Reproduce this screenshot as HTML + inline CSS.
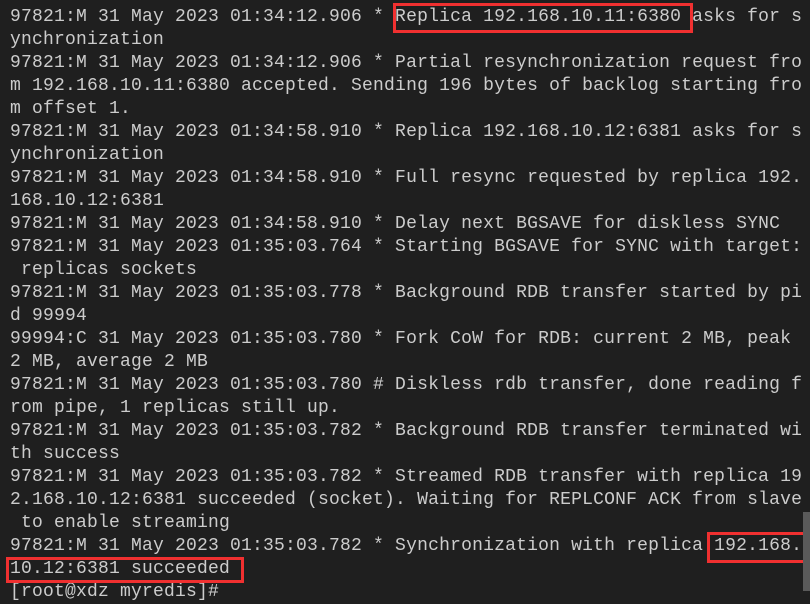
<!DOCTYPE html>
<html><head><meta charset="utf-8"><style>
html,body{margin:0;padding:0;width:810px;height:591px;overflow:hidden;background:#1f1f1f;}
pre{position:absolute;left:10px;top:6px;margin:0;font-family:"Liberation Mono",monospace;font-size:18px;letter-spacing:0.2px;line-height:23px;color:#cccccc;white-space:pre;}
.box{position:absolute;border:3px solid #f03030;box-sizing:border-box;}
.sb{position:absolute;left:803px;top:512px;width:7px;height:79px;background:#5a5a5a;}
</style></head><body>
<pre>97821:M 31 May 2023 01:34:12.906 * Replica 192.168.10.11:6380 asks for s
ynchronization
97821:M 31 May 2023 01:34:12.906 * Partial resynchronization request fro
m 192.168.10.11:6380 accepted. Sending 196 bytes of backlog starting fro
m offset 1.
97821:M 31 May 2023 01:34:58.910 * Replica 192.168.10.12:6381 asks for s
ynchronization
97821:M 31 May 2023 01:34:58.910 * Full resync requested by replica 192.
168.10.12:6381
97821:M 31 May 2023 01:34:58.910 * Delay next BGSAVE for diskless SYNC
97821:M 31 May 2023 01:35:03.764 * Starting BGSAVE for SYNC with target:
 replicas sockets
97821:M 31 May 2023 01:35:03.778 * Background RDB transfer started by pi
d 99994
99994:C 31 May 2023 01:35:03.780 * Fork CoW for RDB: current 2 MB, peak
2 MB, average 2 MB
97821:M 31 May 2023 01:35:03.780 # Diskless rdb transfer, done reading f
rom pipe, 1 replicas still up.
97821:M 31 May 2023 01:35:03.782 * Background RDB transfer terminated wi
th success
97821:M 31 May 2023 01:35:03.782 * Streamed RDB transfer with replica 19
2.168.10.12:6381 succeeded (socket). Waiting for REPLCONF ACK from slave
 to enable streaming
97821:M 31 May 2023 01:35:03.782 * Synchronization with replica 192.168.
10.12:6381 succeeded
[root@xdz myredis]# </pre>
<div class="box" style="left:393px;top:3px;width:300px;height:30px"></div>
<div class="box" style="left:707px;top:532px;width:99px;height:31px"></div>
<div class="box" style="left:6px;top:557px;width:238px;height:26px"></div>
<div class="sb"></div>
</body></html>
